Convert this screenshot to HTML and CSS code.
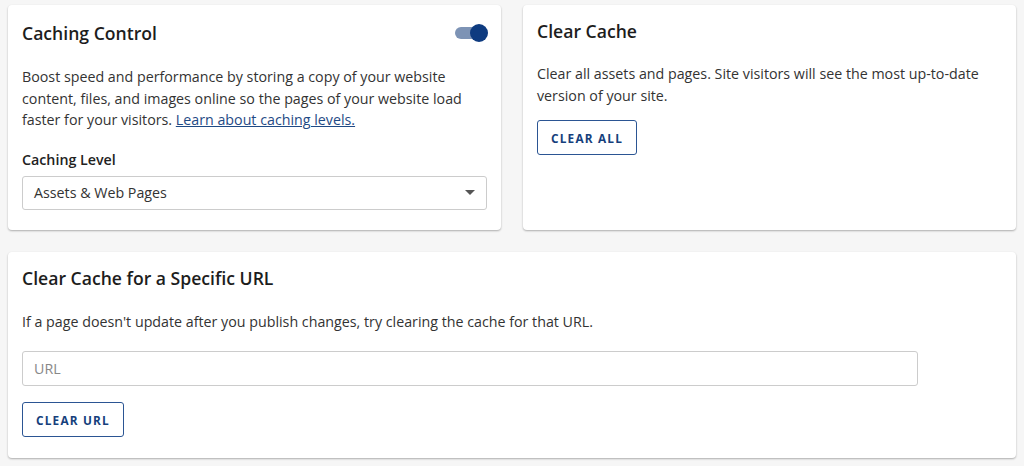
FILE: index.html
```html
<!DOCTYPE html>
<html lang="en">
<head>
    <meta charset="UTF-8">
    <meta name="viewport" content="width=device-width, initial-scale=1.0">
    <title>Caching</title>
    <link rel="stylesheet" href="styles.css">
</head>
<body>
    <div class="grid">
        <div class="card">
            <div class="card-head">
                <h3>Caching Control</h3>
                <span class="toggle"><span class="knob"></span></span>
            </div>
            <p class="desc">Boost speed and performance by storing a copy of your website content, files, and images online so the pages of your website load faster for your visitors. <a href="#">Learn about caching levels.</a></p>
            <div class="label">Caching Level</div>
            <div class="select">
                <span>Assets &amp; Web Pages</span>
                <span class="caret"></span>
            </div>
        </div>
        <div class="card">
            <div class="card-head">
                <h3>Clear Cache</h3>
            </div>
            <p class="desc short">Clear all assets and pages. Site visitors will see the most up-to-date version of your site.</p>
            <button class="btn">CLEAR ALL</button>
        </div>
        <div class="card wide">
            <div class="card-head">
                <h3>Clear Cache for a Specific URL</h3>
            </div>
            <p class="desc url-desc">If a page doesn't update after you publish changes, try clearing the cache for that URL.</p>
            <input class="url" type="text" placeholder="URL">
            <button class="btn">CLEAR URL</button>
        </div>
    </div>
</body>
</html>
```

FILE: styles.css
```css
body {
    margin: 0;
    padding: 5px 8px;
    background-color: #f6f6f6;
    font-family: "Open Sans", "Noto Sans", sans-serif;
    color: #333;
}
.grid {
    display: grid;
    grid-template-columns: 493px 493px;
    column-gap: 22px;
    row-gap: 22px;
}
.card {
    background-color: #fff;
    border-radius: 4px;
    box-shadow: 0 1px 2px rgba(0, 0, 0, 0.3);
    padding: 14px 14px 20px 14px;
}
.wide {
    grid-column: 1 / 3;
    padding-bottom: 21px;
}
.card-head {
    display: flex;
    align-items: center;
    justify-content: space-between;
}
h3 {
    margin: 0;
    font-size: 17.6px;
    line-height: 24px;
    font-weight: 600;
    color: #1d1d1d;
}
.toggle {
    position: relative;
    width: 32px;
    height: 12px;
    margin: 8px 0 8px 0;
    border-radius: 6px;
    background-color: #7d93b5;
}
.knob {
    position: absolute;
    right: -1px;
    top: -3px;
    width: 18px;
    height: 18px;
    border-radius: 50%;
    background-color: #0e3b80;
}
.desc {
    margin: 19px 0 0 0;
    font-size: 14.25px;
    line-height: 21.5px;
    padding-right: 10px;
}
.short {
    margin-top: 20px;
}
.url-desc {
    margin-top: 21px;
}
.desc a {
    color: #1f4a85;
}
.label {
    margin-top: 18px;
    font-size: 14.25px;
    line-height: 21px;
    font-weight: 600;
    color: #222;
}
.select {
    margin-top: 6px;
    height: 32px;
    border: 1px solid #ccc;
    border-radius: 3px;
    display: flex;
    align-items: center;
    justify-content: space-between;
    padding: 0 11px 0 11px;
    font-size: 14.25px;
    color: #333;
}
.caret {
    width: 0;
    height: 0;
    border-left: 5px solid transparent;
    border-right: 5px solid transparent;
    border-top: 5px solid #555;
}
.btn {
    display: block;
    margin-top: 14px;
    height: 35px;
    padding: 0 13px;
    background-color: #fff;
    border: 1px solid #2b5593;
    border-radius: 3px;
    font-family: "Open Sans", "Noto Sans", sans-serif;
    font-size: 11.8px;
    font-weight: 700;
    letter-spacing: 1.2px;
    color: #163f7c;
}
.url {
    display: block;
    box-sizing: border-box;
    margin-top: 19px;
    width: 896px;
    height: 35px;
    border: 1px solid #ccc;
    border-radius: 3px;
    padding: 0 11px;
    font-family: "Open Sans", "Noto Sans", sans-serif;
    font-size: 14.25px;
}
.url::placeholder {
    color: #888;
}
.wide .btn {
    margin-top: 16px;
}
```
